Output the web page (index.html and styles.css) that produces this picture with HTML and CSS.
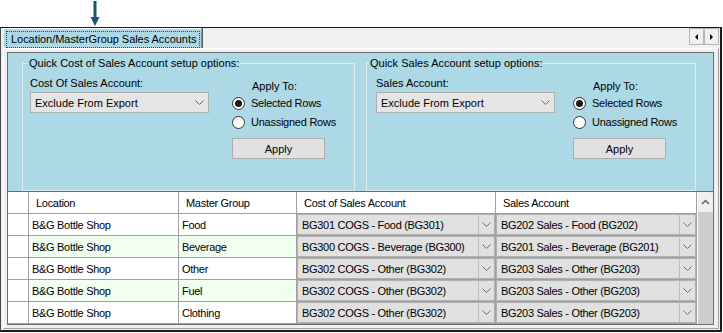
FILE: index.html
```html
<!DOCTYPE html>
<html lang="en">
<head>
    <meta charset="UTF-8">
    <title>Location/MasterGroup Sales Accounts</title>
    <link rel="stylesheet" href="styles.css">
</head>
<body>
    <div class="pointer">
        <svg class="pointer-arrow" width="12" height="27" viewBox="0 0 12 27">
            <rect x="4.5" y="1" width="3" height="18" fill="#1f5372"/>
            <polygon points="1.5,17 10.5,17 6,26" fill="#1f5372"/>
        </svg>
    </div>

    <div class="window">
        <div class="tab-strip">
            <div class="tab"><span class="tab-label">Location/MasterGroup Sales Accounts</span></div>
            <div class="tab-scroll">
                <span class="scroll-btn"><i class="tri tri-left"></i></span>
                <span class="scroll-btn"><i class="tri tri-right"></i></span>
            </div>
        </div>

        <div class="tab-page">
            <div class="page-frame">
                <div class="options">
                    <fieldset class="group group-cost">
                        <legend>Quick Cost of Sales Account setup options:</legend>
                        <div class="group-body">
                            <div class="account-col">
                                <div class="field-label">Cost Of Sales Account:</div>
                                <div class="combo">
                                    <span class="combo-value">Exclude From Export</span>
                                    <svg class="chev" width="9" height="5" viewBox="0 0 9 5"><path d="M0.5 0.5 L4.5 4.5 L8.5 0.5" fill="none" stroke="#6a6a6a"/></svg>
                                </div>
                            </div>
                            <div class="apply-col">
                                <div class="apply-title">Apply To:</div>
                                <div class="radio-row"><span class="radio checked"></span>Selected Rows</div>
                                <div class="radio-row"><span class="radio"></span>Unassigned Rows</div>
                                <div class="button">Apply</div>
                            </div>
                        </div>
                    </fieldset>

                    <fieldset class="group group-sales">
                        <legend>Quick Sales Account setup options:</legend>
                        <div class="group-body">
                            <div class="account-col">
                                <div class="field-label">Sales Account:</div>
                                <div class="combo">
                                    <span class="combo-value">Exclude From Export</span>
                                    <svg class="chev" width="9" height="5" viewBox="0 0 9 5"><path d="M0.5 0.5 L4.5 4.5 L8.5 0.5" fill="none" stroke="#6a6a6a"/></svg>
                                </div>
                            </div>
                            <div class="apply-col">
                                <div class="apply-title">Apply To:</div>
                                <div class="radio-row"><span class="radio checked"></span>Selected Rows</div>
                                <div class="radio-row"><span class="radio"></span>Unassigned Rows</div>
                                <div class="button">Apply</div>
                            </div>
                        </div>
                    </fieldset>
                </div>

                <div class="grid">
                    <div class="grid-body" id="gridBody">
                        <div class="grid-row head">
                            <div class="cell"></div>
                            <div class="cell">Location</div>
                            <div class="cell">Master Group</div>
                            <div class="cell">Cost of Sales Account</div>
                            <div class="cell">Sales Account</div>
                        </div>
                    </div>
                    <div class="vscroll">
                        <div class="vscroll-up">
                            <svg width="9" height="6" viewBox="0 0 9 6"><path d="M1 5 L4.5 1.5 L8 5" fill="none" stroke="#606060" stroke-width="1.5"/></svg>
                        </div>
                        <div class="vscroll-thumb"></div>
                    </div>
                </div>
            </div>
        </div>
    </div>

    <script>
        const rows = [
            ['B&G Bottle Shop', 'Food', 'BG301 COGS - Food (BG301)', 'BG202 Sales - Food (BG202)'],
            ['B&G Bottle Shop', 'Beverage', 'BG300 COGS - Beverage (BG300)', 'BG201 Sales - Beverage (BG201)'],
            ['B&G Bottle Shop', 'Other', 'BG302 COGS - Other (BG302)', 'BG203 Sales - Other (BG203)'],
            ['B&G Bottle Shop', 'Fuel', 'BG302 COGS - Other (BG302)', 'BG203 Sales - Other (BG203)'],
            ['B&G Bottle Shop', 'Clothing', 'BG302 COGS - Other (BG302)', 'BG203 Sales - Other (BG203)']
        ];

        const chevron = '<svg width="9" height="5" viewBox="0 0 9 5"><path d="M0.5 0.5 L4.5 4.5 L8.5 0.5" fill="none" stroke="#6a6a6a"/></svg>';

        function comboCell(text) {
            const cell = document.createElement('div');
            cell.className = 'cell combo-cell';
            cell.innerHTML = '<div class="cell-combo"><span class="value"></span><span class="drop">' + chevron + '</span></div>';
            cell.querySelector('.value').textContent = text;
            return cell;
        }

        function textCell(text) {
            const cell = document.createElement('div');
            cell.className = 'cell text-cell';
            cell.textContent = text;
            return cell;
        }

        const body = document.getElementById('gridBody');
        rows.forEach(function (r, i) {
            const row = document.createElement('div');
            row.className = 'grid-row' + (i % 2 === 1 ? ' alt' : '');
            const header = document.createElement('div');
            header.className = 'cell row-header';
            row.appendChild(header);
            row.appendChild(textCell(r[0]));
            row.appendChild(textCell(r[1]));
            row.appendChild(comboCell(r[2]));
            row.appendChild(comboCell(r[3]));
            body.appendChild(row);
        });
    </script>
</body>
</html>
```

FILE: styles.css
```css
body {
    margin: 0;
    width: 723px;
    height: 333px;
    overflow: hidden;
    background-color: #fff;
    font-family: "Liberation Sans", Arial, sans-serif;
    font-size: 11px;
    color: #000;
}

.pointer {
    height: 27px;
    padding-left: 89px;
}
.pointer-arrow {
    display: block;
}

/* window + tab control */
.window {
    width: 722px;
    box-sizing: border-box;
    border: 1px solid #1a1a1a;
    border-left-color: #4a4a4a;
    border-right-width: 2px;
    border-bottom-width: 2px;
    padding: 0 1px 1px 2px;
    background-color: #f0f0f0;
}
.tab-strip {
    height: 20px;
    display: flex;
    justify-content: space-between;
    align-items: flex-start;
}
.tab {
    width: 199px;
    height: 20px;
    box-sizing: border-box;
    background-color: #add8e6;
    border-top: 1px solid #fff;
    border-left: 1px solid #fff;
    border-right: 1px solid #8c8c8c;
    box-shadow: 1px 0 0 #5e5e5e;
    padding: 2px 1px 0 2px;
}
.tab-label {
    display: block;
    border: 1px dotted #7b2e12;
    padding: 1px 0 1px 4px;
    line-height: 13px;
    white-space: nowrap;
    letter-spacing: -0.05px;
}
.tab-scroll {
    display: flex;
}
.scroll-btn {
    width: 15px;
    height: 17px;
    box-sizing: border-box;
    border: 1px solid #b4b4b4;
    background-color: #f0f0f0;
    display: flex;
    align-items: center;
    justify-content: center;
}
.tri {
    width: 0;
    height: 0;
    border-top: 3px solid transparent;
    border-bottom: 3px solid transparent;
}
.tri-left {
    border-right: 3px solid #000;
}
.tri-right {
    border-left: 3px solid #000;
}

.tab-page {
    border: 1px solid;
    border-color: #fff #a0a0a0 #a0a0a0 #fff;
    padding: 3px 4px 3px 3px;
}
.page-frame {
    border: 1px solid #6d6d6d;
}

/* quick setup panel */
.options {
    height: 138px;
    box-sizing: border-box;
    background-color: #add8e6;
    padding: 4px 0 0 14px;
    display: flex;
    gap: 11px;
}
.group {
    margin: 0;
    min-width: 0;
    box-sizing: border-box;
    border: 1px solid #dcedf2;
    padding: 0 0 16px 5px;
}
.group-cost {
    width: 333px;
}
.group-sales {
    width: 330px;
    padding-left: 2px;
}
.group legend {
    padding: 0 1px;
    line-height: 13px;
}
.group-body {
    display: flex;
    padding-top: 7px;
}
.account-col {
    width: 179px;
    margin-left: 2px;
}
.group-sales .account-col {
    margin-left: 7px;
}
.field-label {
    line-height: 13px;
}
.combo {
    margin-top: 2px;
    height: 21px;
    box-sizing: border-box;
    border: 1px solid #adadad;
    background-color: #e5e5e5;
    display: flex;
    align-items: center;
    justify-content: space-between;
    padding: 0 4px 0 4px;
}
.chev {
    display: block;
}
.apply-col {
    width: 93px;
    margin-left: 23px;
    padding-top: 3px;
}
.group-sales .apply-col {
    margin-left: 18px;
}
.apply-title {
    line-height: 13px;
    padding-left: 20px;
}
.radio-row {
    height: 18px;
    display: flex;
    align-items: center;
    gap: 6px;
    margin-top: 1px;
    white-space: nowrap;
    letter-spacing: -0.25px;
}
.radio {
    width: 13px;
    height: 13px;
    box-sizing: border-box;
    border: 1px solid #333;
    border-radius: 50%;
    background-color: #fff;
    display: flex;
    align-items: center;
    justify-content: center;
    flex-shrink: 0;
}
.radio.checked::after {
    content: "";
    width: 7px;
    height: 7px;
    border-radius: 50%;
    background-color: #1a1a1a;
}
.button {
    margin-top: 7px;
    height: 21px;
    box-sizing: border-box;
    border: 1px solid #adadad;
    background-color: #e1e1e1;
    display: flex;
    align-items: center;
    justify-content: center;
}

/* data grid */
.grid {
    display: flex;
    border-top: 1px solid #6d6d6d;
}
.grid-body {
    width: 689px;
    letter-spacing: -0.3px;
}
.grid-row {
    display: grid;
    grid-template-columns: 21px 150px 118px 199px 201px;
    height: 22px;
}
.cell {
    box-sizing: border-box;
    border-right: 1px solid #a0a0a0;
    border-bottom: 1px solid #a0a0a0;
    padding-left: 3px;
    display: flex;
    align-items: center;
    white-space: nowrap;
    overflow: hidden;
    background-color: #fff;
}
.grid-row.head .cell {
    padding-left: 7px;
}
.grid-row.alt .text-cell {
    background-color: #f0fff0;
}
.combo-cell {
    padding-left: 0;
    align-items: stretch;
}
.cell-combo {
    flex: 1;
    min-width: 0;
    display: flex;
    align-items: center;
    border: 1px solid #b0b0b0;
    background-color: #e1e1e1;
}
.cell-combo .value {
    flex: 1;
    padding-left: 4px;
    overflow: hidden;
}
.cell-combo .drop {
    width: 15px;
    align-self: stretch;
    border-left: 1px solid #bdbdbd;
    display: flex;
    align-items: center;
    justify-content: center;
}
.cell-combo .drop svg {
    display: block;
}

.vscroll {
    width: 16px;
    box-sizing: border-box;
    border-left: 1px solid #fff;
    background-color: #f0f0f0;
    display: flex;
    flex-direction: column;
}
.vscroll-up {
    height: 20px;
    display: flex;
    align-items: center;
    justify-content: center;
}
.vscroll-thumb {
    flex: 1;
    background-color: #cdcdcd;
}
```
